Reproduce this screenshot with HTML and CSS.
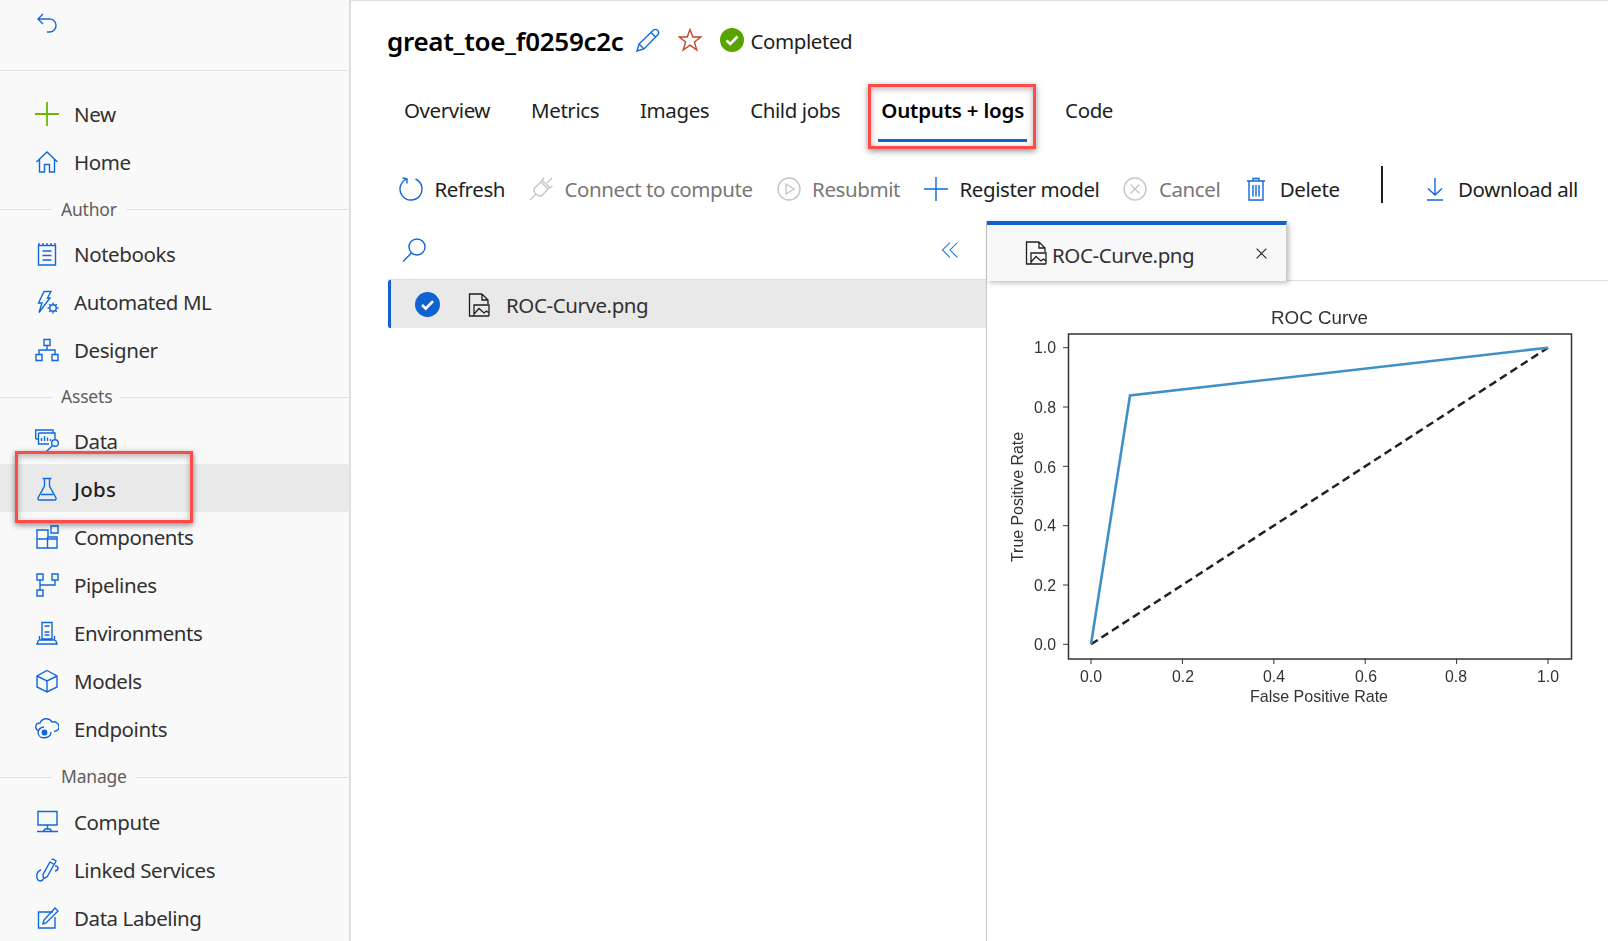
FILE: index.html
```html
<!DOCTYPE html>
<html lang="en">
<head>
<meta charset="utf-8">
<title>great_toe_f0259c2c</title>
<link rel="stylesheet" href="styles.css">
</head>
<body>
<div class="app">
  <aside class="sidebar">
    <div class="side-top">
      <svg class="ico back" viewBox="0 0 24 24"><path d="M8 2 L3 7 L8 12 M3 7 H14 a6.5 6.5 0 0 1 1 13 h-3"/></svg>
    </div>
    <nav class="side-nav">
      <a class="row"><svg class="ico green" viewBox="0 0 24 24"><path d="M12 0 V24 M0 12 H24"/></svg><span>New</span></a>
      <a class="row"><svg class="ico" viewBox="0 0 24 24"><path d="M1.5 12 L12 2 L22.5 12 M4.5 9.5 V22 H9.5 V14.5 H14.5 V22 H19.5 V9.5"/></svg><span>Home</span></a>
      <div class="sec sec-first">Author</div>
      <a class="row"><svg class="ico" viewBox="0 0 24 24"><path d="M3.5 3.5 H20.5 V23 H3.5 Z M4 1 V3 M8 1 V3 M12 1 V3 M16 1 V3 M20 1 V3 M7.5 9 H16.5 M7.5 13.5 H16.5 M7.5 18 H16.5"/></svg><span>Notebooks</span></a>
      <a class="row"><svg class="ico" viewBox="0 0 24 24"><path d="M9 1.5 H16 L12.5 8 H15 L4 22.5 L7 13 H3.5 Z"/><circle cx="18" cy="18" r="3.2"/><path d="M18 12.5 V14.5 M18 21.5 V23.5 M12.5 18 H14.5 M21.5 18 H23.5 M14.2 14.2 L15.6 15.6 M20.4 20.4 L21.8 21.8 M21.8 14.2 L20.4 15.6 M15.6 20.4 L14.2 21.8"/></svg><span>Automated ML</span></a>
      <a class="row"><svg class="ico" viewBox="0 0 24 24"><path d="M9 1.5 H15 V7.5 H9 Z M1 16.5 H7 V22.5 H1 Z M17 16.5 H23 V22.5 H17 Z M12 7.5 V12 M4 16.5 V12 H20 V16.5"/></svg><span>Designer</span></a>
      <div class="sec">Assets</div>
      <a class="row"><svg class="ico" viewBox="0 0 24 24"><path d="M0.7 10 V1 H18 V4 M0.7 10 H3.5 M3.5 4 H20 V10 M3.5 4 V15 H14 M6.5 12 V9 M9.5 12 V7 M12.5 12 V8.5 M15.5 12 V10"/><circle cx="20" cy="14" r="3.3"/><path d="M17.5 16.5 L11 23"/></svg><span>Data</span></a>
      <a class="row active"><svg class="ico" viewBox="0 0 24 24"><path d="M7.5 1.5 H16.5 M9.5 1.5 V9 L3 21 Q2.6 23 4.5 23 H19.5 Q21.4 23 21 21 L14.5 9 V1.5 M6 17.5 H18"/></svg><span>Jobs</span></a>
      <a class="row"><svg class="ico" viewBox="0 0 24 24"><path d="M2 5 H13 V12 H22 V23 H2 Z M2 14 H22 M12.5 12 V23 M16 1 H23 V8 H16 Z"/></svg><span>Components</span></a>
      <a class="row"><svg class="ico" viewBox="0 0 24 24"><path d="M2 1 H8 V7 H2 Z M17 1 H23 V7 H17 Z M2 17 H8 V23 H2 Z M5 7 V17 M5 12 H20 V7"/></svg><span>Pipelines</span></a>
      <a class="row"><svg class="ico" viewBox="0 0 24 24"><path d="M7 1.5 H17 V18 H7 Z M9.5 5 H14.5 M9.5 11 H14.5 M9.5 14 H14.5 M4.5 15 V19 H19.5 V15 M3.5 19 L2 23 H22 L20.5 19"/></svg><span>Environments</span></a>
      <a class="row"><svg class="ico" viewBox="0 0 24 24"><path d="M12 1.5 L22 7 V18 L12 23 L2 18 V7 Z M2 7 L12 12 L22 7 M12 12 V23"/></svg><span>Models</span></a>
      <a class="row"><svg class="ico" viewBox="0 0 24 24"><path d="M4 14 C-1 12 0 6 5 6 C7 1 14 0 17 5 C21 4 24 7 24 10 C24 12.5 22 14 19 14.5 M16 15 C16 22 4 23 3 16 C3 13 5 10.5 9 10"/><circle cx="9.5" cy="15.5" r="2.2" class="solid"/></svg><span>Endpoints</span></a>
      <div class="sec sec-wide">Manage</div>
      <a class="row"><svg class="ico" viewBox="0 0 24 24"><path d="M3 1.5 H22 V15 H3 Z M12.5 15 V19 M8 22 L10 19 H15 L17 22 M2 21.5 H23"/></svg><span>Compute</span></a>
      <a class="row"><svg class="ico" viewBox="0 0 24 24"><path d="M15 4 L19 6.5 L12 19 L8.5 20.5 L8 16.5 Z M16.5 2 L18 1 L21 3 L19.5 6 M20 8 C24 8 24 12 20 13 M6 12 C0 14 1 22 5 23 C7 23 8 22 8.5 20.5"/></svg><span>Linked Services</span></a>
      <a class="row"><svg class="ico" viewBox="0 0 24 24"><path d="M18 6 H3.5 V22 H20 V11 M8 18 L9 14 L20 2 L23 5 L11 17 Z"/></svg><span>Data Labeling</span></a>
    </nav>
  </aside>

  <main class="main">
    <header class="title-row">
      <h1 class="title">great_toe_f0259c2c</h1>
      <svg class="ico pen" viewBox="0 0 24 24"><path d="M1 23 L3 16 L17.5 2 Q19.5 0.5 22 2.5 Q23.5 5 22 6.5 L8 21 Z M15 4.5 L20 9.5 M3 16 L8 21"/></svg>
      <svg class="ico star" viewBox="0 0 24 24"><path d="M12 1.5 L14.8 9 H22.8 L16.4 14 L18.8 22 L12 17.2 L5.2 22 L7.6 14 L1.2 9 H9.2 Z"/></svg>
      <svg class="status-ico" viewBox="0 0 24 24"><circle cx="12" cy="12" r="12"/><path d="M6.5 12.5 L10.3 16 L17.5 8.5"/></svg>
      <span class="status">Completed</span>
    </header>

    <nav class="tabs">
      <a class="tab">Overview</a>
      <a class="tab">Metrics</a>
      <a class="tab">Images</a>
      <a class="tab">Child jobs</a>
      <a class="tab on">Outputs + logs</a>
      <a class="tab">Code</a>
    </nav>

    <div class="toolbar">
      <a class="tool"><svg class="ico" viewBox="0 0 24 24"><path d="M8 1.8 A11 11 0 1 0 16.5 2 M3.5 1 L8 1.8 L8 6.5"/></svg><span>Refresh</span></a>
      <a class="tool off"><svg class="ico" viewBox="0 0 24 24"><path d="M1 23 L7 17 M23 1 L18 6 M13 3 L21 11 M15 0.5 L12 5 M23.5 9 L19 12 M12 5 L5.5 11 Q4 14 7 17 Q10 20 13 18.5 L19 12 Z"/></svg><span>Connect to compute</span></a>
      <a class="tool off"><svg class="ico" viewBox="0 0 24 24"><circle cx="12" cy="12" r="11"/><path d="M9 7 L17 12 L9 17 Z"/></svg><span>Resubmit</span></a>
      <a class="tool"><svg class="ico" viewBox="0 0 24 24"><path d="M12 0 V24 M0 12 H24"/></svg><span>Register model</span></a>
      <a class="tool off"><svg class="ico" viewBox="0 0 24 24"><circle cx="12" cy="12" r="11"/><path d="M7.5 7.5 L16.5 16.5 M16.5 7.5 L7.5 16.5"/></svg><span>Cancel</span></a>
      <a class="tool"><svg class="ico" viewBox="0 0 24 24"><path d="M3 4 H21 M9 4 V1.5 H15 V4 M5 4 V23 H19 V4 M9 8 V19.5 M12 8 V19.5 M15 8 V19.5"/></svg><span>Delete</span></a>
      <i class="tool-sep"></i>
      <a class="tool"><svg class="ico" viewBox="0 0 24 24"><path d="M12 1 V18 M5 11.5 L12 18 L19 11.5 M4 23 H20"/></svg><span>Download all</span></a>
    </div>

    <section class="split">
      <div class="tree">
        <div class="tree-head">
          <svg class="ico" viewBox="0 0 24 24"><circle cx="15" cy="9" r="8"/><path d="M9.5 15 L1 23.5"/></svg>
          <svg class="ico chev" viewBox="0 0 24 24"><path d="M12 2 L2 12 L12 22 M22 2 L12 12 L22 22"/></svg>
        </div>
        <div class="file-row">
          <svg class="check" viewBox="0 0 24 24"><circle cx="12" cy="12" r="12"/><path d="M6.8 12.5 L10.3 16 L17.3 8.8"/></svg>
          <svg class="ico file" viewBox="0 0 22 24"><path d="M14 1 H1.5 V23 H21 M14 1 L20 7 V11 M14 1 V7 H20 M6 23 V12 H21 V23 M6 21 L11 15.5 L16 20 L18.5 18 L21 20"/></svg>
          <span>ROC-Curve.png</span>
        </div>
      </div>
      <div class="viewer">
        <div class="doc-bar">
          <div class="doc-tab">
            <svg class="ico file" viewBox="0 0 22 24"><path d="M14 1 H1.5 V23 H21 M14 1 L20 7 V11 M14 1 V7 H20 M6 23 V12 H21 V23 M6 21 L11 15.5 L16 20 L18.5 18 L21 20"/></svg>
            <span>ROC-Curve.png</span>
            <svg class="ico close" viewBox="0 0 24 24"><path d="M3 3 L21 21 M21 3 L3 21"/></svg>
          </div>
        </div>
        <svg class="chart" viewBox="990 290 618 430" aria-label="ROC Curve chart">
          <rect class="frame" x="1068.5" y="334" width="503" height="325"/>
          <path class="axis" d="M1091 659 v5 M1182.4 659 v5 M1273.8 659 v5 M1365.2 659 v5 M1456.6 659 v5 M1548 659 v5 M1068 644.3 h-5 M1068 585 h-5 M1068 525.7 h-5 M1068 466.3 h-5 M1068 407 h-5 M1068 347.7 h-5"/>
          <path class="dash" d="M1091 644.3 L1548 347.7"/>
          <path class="curve" d="M1091 644.3 L1130 395.5 L1548 347.7"/>
          <text class="ct" x="1271" y="324" textLength="97" lengthAdjust="spacingAndGlyphs">ROC Curve</text>
          <text class="ct sm" x="1250" y="702" textLength="138" lengthAdjust="spacingAndGlyphs">False Positive Rate</text>
          <text class="ct sm" transform="translate(1023 562) rotate(-90)" textLength="130" lengthAdjust="spacingAndGlyphs">True Positive Rate</text>
          <g class="ticks">
            <text x="1034" y="353" textLength="22" lengthAdjust="spacingAndGlyphs">1.0</text>
            <text x="1034" y="413" textLength="22" lengthAdjust="spacingAndGlyphs">0.8</text>
            <text x="1034" y="473" textLength="22" lengthAdjust="spacingAndGlyphs">0.6</text>
            <text x="1034" y="531" textLength="22" lengthAdjust="spacingAndGlyphs">0.4</text>
            <text x="1034" y="591" textLength="22" lengthAdjust="spacingAndGlyphs">0.2</text>
            <text x="1034" y="650" textLength="22" lengthAdjust="spacingAndGlyphs">0.0</text>
            <text x="1080" y="682" textLength="22" lengthAdjust="spacingAndGlyphs">0.0</text>
            <text x="1172" y="682" textLength="22" lengthAdjust="spacingAndGlyphs">0.2</text>
            <text x="1263" y="682" textLength="22" lengthAdjust="spacingAndGlyphs">0.4</text>
            <text x="1355" y="682" textLength="22" lengthAdjust="spacingAndGlyphs">0.6</text>
            <text x="1445" y="682" textLength="22" lengthAdjust="spacingAndGlyphs">0.8</text>
            <text x="1537" y="682" textLength="22" lengthAdjust="spacingAndGlyphs">1.0</text>
          </g>
        </svg>
      </div>
    </section>
  </main>

  <div class="callout callout-jobs"></div>
  <div class="callout callout-tab"></div>
</div>
</body>
</html>
```

FILE: styles.css
```css
* { box-sizing: border-box; }
html, body { margin: 0; height: 100%; overflow: hidden; background: #fff; }
body {
  font-family: "Noto Sans", "Open Sans", sans-serif;
  font-size: 20.5px;
  color: #323130;
  letter-spacing: -0.42px;
}
.app { position: relative; display: flex; width: 1608px; height: 941px; overflow: hidden; }

.ico { display: block; width: 24px; height: 24px; flex: none; fill: none; stroke: #1168dc; stroke-width: 1.4; }
.ico .solid { fill: #1168dc; }
.ico.green { stroke: #6bb700; stroke-width: 1.8; }

/* sidebar */
.sidebar { width: 351px; flex: none; background: #f9f9f9; border-right: 2px solid #dedede; overflow: hidden; }
.side-top { height: 71px; padding: 12px 0 0 35px; border-bottom: 1px solid #e2e2e2; margin-right: 1px; }
.side-nav { padding-top: 18px; }
.row { display: flex; align-items: center; gap: 15px; height: 48px; padding: 1px 0 0 35px; }
.row.active { background: #e9e9e9; border-radius: 0 3px 3px 0; color: #201f1e; }
.row.active span { font-weight: 500; letter-spacing: 0.3px; }
.sec {
  display: flex; align-items: center; gap: 9px; height: 43px; padding-top: 3px;
  font-size: 17.5px; color: #605e5c; letter-spacing: -0.2px;
}
.sec::before { content: ""; width: 52px; height: 1px; margin-top: 2px; background: #e1e1e1; }
.sec::after { content: ""; flex: 1; height: 1px; margin-top: 2px; background: #e1e1e1; }
.sec-first { height: 44px; }
.sec-wide { height: 45px; }

/* main */
.main { flex: 1; min-width: 0; display: flex; flex-direction: column; border-top: 1px solid #dedede; }
.title-row { display: flex; align-items: center; height: 82px; padding: 0 0 2px 36px; }
.title { margin: 0; font-size: 26px; font-weight: 600; color: #000; letter-spacing: -0.3px; }
.pen { margin-left: 12px; margin-top: -3px; }
.star { margin-left: 18px; margin-top: -3px; stroke: #c8452a; }
.status-ico { width: 24px; height: 24px; margin-left: 18px; margin-top: -2px; }
.status-ico circle { fill: #57a300; }
.status-ico path { fill: none; stroke: #fff; stroke-width: 2.6; }
.status { margin-left: 7px; color: #201f1e; }

.tabs { display: flex; gap: 35px; height: 59px; padding-left: 50px; color: #201f1e; }
.tab { display: flex; align-items: center; height: 59px; padding: 0 3px 3px; border-bottom: 3px solid transparent; }
.tab.on { font-weight: 600; color: #000; letter-spacing: -0.2px; border-bottom-color: #0f62d0; }

.toolbar { display: flex; align-items: center; gap: 24px; height: 79px; padding: 26px 0 11px 48px; color: #201f1e; }
.tool { display: flex; align-items: center; gap: 11.5px; }
.tool.off { color: #797775; }
.tool.off .ico { stroke: #c8c6c4; }
.tool-sep { width: 2px; height: 37px; background: #201f1e; margin: 0 16px 9px 17px; }

.split { flex: 1; display: flex; min-height: 0; padding-left: 37px; }
.tree { width: 598px; flex: none; }
.tree-head { display: flex; justify-content: space-between; align-items: center; height: 59px; padding: 0 27px 1px 14px; border-bottom: 1px solid #dedede; }
.tree-head .chev { width: 18px; height: 18px; }
.file-row { display: flex; align-items: center; height: 48px; padding: 1px 0 0 24px; background: #e9e9e9; border-left: 3px solid #0f62d0; border-radius: 2px; color: #323130; }
.check { width: 25px; height: 25px; flex: none; }
.check circle { fill: #0f62d0; }
.check path { fill: none; stroke: #fff; stroke-width: 2.6; }
.file { stroke: #201f1e; stroke-width: 1.3; width: 22px; }
.file-row .file { margin-left: 28px; margin-right: 16px; }

.viewer { flex: 1; min-width: 0; border-left: 1px solid #c8c8c8; }
.doc-bar { height: 60px; border-bottom: 1px solid #dedede; }
.doc-tab { display: flex; align-items: center; width: 300px; height: 60px; padding: 3px 0 0 38px; background: #f8f8f8; border-top: 4px solid #0f62d0; border-right: 1px solid #c8c8c8; box-shadow: 2px 2px 5px rgba(0,0,0,.25); color: #323130; }
.doc-tab .file { margin-right: 5px; margin-top: -4px; }
.doc-tab .close { width: 13px; height: 13px; margin-left: auto; margin-right: 18px; margin-top: -3px; stroke: #201f1e; stroke-width: 2; }

.chart { display: block; width: 618px; height: 430px; margin: 9px 0 0 3px; filter: blur(.5px); font-family: "Liberation Sans", Arial, sans-serif; }
.frame { fill: none; stroke: #333; stroke-width: 1.5; }
.axis { stroke: #333; stroke-width: 1; fill: none; }
.curve { fill: none; stroke: #3f90c6; stroke-width: 2.6; }
.dash { fill: none; stroke: #222; stroke-width: 2.5; stroke-dasharray: 8 4.5; }
.ct { font-size: 19px; fill: #333; letter-spacing: 0; }
.ct.sm { font-size: 17px; }
.ticks text { font-size: 17px; fill: #333; letter-spacing: 0; }

/* annotation boxes drawn over the screenshot */
.callout { position: absolute; border: 3.5px solid #ff4a4a; box-shadow: 0 2px 6px rgba(0,0,0,.45), inset 0 2px 6px rgba(0,0,0,.3); pointer-events: none; }
.callout-jobs { left: 15px; top: 451px; width: 178px; height: 72px; }
.callout-tab { left: 868px; top: 84px; width: 168px; height: 65px; }
```
